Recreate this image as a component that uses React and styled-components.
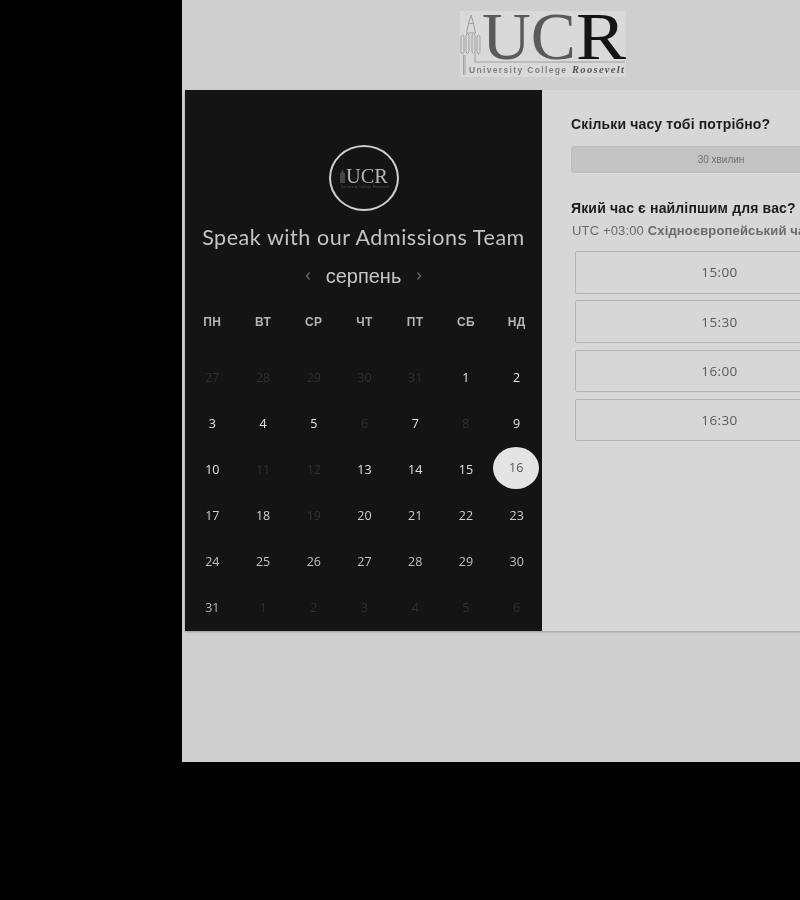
import React from 'react'
import styled, { createGlobalStyle } from 'styled-components'

const GlobalStyle = createGlobalStyle`
  html, body {
    margin: 0;
    height: 100%;
    background: #000;
    overflow: hidden;
  }
  * { box-sizing: border-box; }
`

const Sheet = styled.div`
  margin-left: 182px;
  width: 722px;
  height: 762px;
  background: #cfcfcf;
  font-family: "Liberation Sans", Arial, sans-serif;
  display: flex;
  flex-direction: column;
  filter: grayscale(1) blur(0.35px);
`

const LogoBar = styled.header`
  display: flex;
  justify-content: center;
  padding-top: 11px;
  height: 90px;
`

const Card = styled.section`
  margin-left: 3px;
  width: 716px;
  height: 541px;
  display: flex;
  box-shadow: 0 1px 2px rgba(0, 0, 0, 0.25);
`

const CalendarPane = styled.div`
  width: 357px;
  background: #141414;
  padding: 55px 0 0 2px;
  display: flex;
  flex-direction: column;
  align-items: center;
`

const Badge = styled.div`
  flex-shrink: 0;
  width: 70px;
  height: 66px;
  margin-right: 2px;
  border: 2px solid #cfcfcf;
  border-radius: 50%;
  display: flex;
  align-items: center;
  justify-content: center;
`

const EventTitle = styled.h1`
  margin: 11px 2px 0 0;
  font-family: Lato, sans-serif;
  font-weight: 400;
  font-size: 21.5px;
  line-height: 30px;
  letter-spacing: 0.55px;
  color: #c4c4c4;
  white-space: nowrap;
`

const MonthRow = styled.div`
  margin: 11px 2px 0 0;
  height: 26px;
  display: flex;
  align-items: center;
  gap: 14px;
  color: #6e6e6e;
`

const MonthName = styled.span`
  font-size: 20px;
  color: #c6c6c6;
`

const WeekHeader = styled.div`
  margin-top: 25px;
  width: 100%;
  display: grid;
  grid-template-columns: repeat(7, 1fr);
`

const WeekDay = styled.span`
  text-align: center;
  font-size: 12px;
  line-height: 16px;
  font-weight: 700;
  letter-spacing: 0.4px;
  color: #b4b4b4;
`

const DaysGrid = styled.div`
  margin-top: 24px;
  width: 100%;
  display: grid;
  grid-template-columns: repeat(7, 1fr);
  grid-auto-rows: 46px;
`

const Day = styled.div`
  display: flex;
  align-items: center;
  justify-content: center;
  font-family: "Open Sans", sans-serif;
  font-size: 12.5px;
  color: ${({ $tone }) => $tone};
`

const SelectedDay = styled.div`
  width: 46px;
  height: 42px;
  margin: 0 1px 2px 0;
  border-radius: 50%;
  background: #e4e4e4;
  color: #555;
  display: flex;
  align-items: center;
  justify-content: center;
  font-family: "Open Sans", sans-serif;
  font-size: 12.5px;
  padding-bottom: 2px;
`

const SlotPane = styled.div`
  flex: 1;
  background: #d7d7d7;
  padding: 26px 29px 0;
`

const Question = styled.h2`
  margin: 0;
  font-size: 14px;
  line-height: 17px;
  font-weight: 700;
  letter-spacing: 0.15px;
  color: #1d1d1d;
  white-space: nowrap;
`

const DurationButton = styled.div`
  margin: 13px 0 27px;
  width: 300px;
  height: 27px;
  background: #c3c3c3;
  border: 1px solid #bdbdbd;
  border-radius: 3px;
  display: flex;
  align-items: center;
  justify-content: center;
  font-size: 10px;
  color: #707070;
`

const Zone = styled.p`
  margin: 6px 0 0 1px;
  font-size: 13px;
  line-height: 16px;
  letter-spacing: 0.15px;
  color: #6a6a6a;
  white-space: nowrap;
  font-weight: 400;
  b { font-weight: 700; }
`

const SlotList = styled.div`
  margin: 12px 0 0 4px;
  width: 289px;
  display: flex;
  flex-direction: column;
  gap: 6.8px;
`

const Slot = styled.div`
  height: 42.5px;
  border: 1px solid #b4b4b4;
  border-radius: 2px;
  display: flex;
  align-items: center;
  justify-content: center;
  font-family: "Open Sans", sans-serif;
  font-size: 13.5px;
  letter-spacing: 0.4px;
  color: #5a5a5a;
`

const Chevron = ({ left }) => (
  <svg width="8" height="10" viewBox="0 0 8 10" fill="none" stroke="currentColor" strokeWidth="1.2">
    <path d={left ? 'M5.5 1.5 2.5 5l3 3.5' : 'M2.5 1.5 5.5 5l-3 3.5'} />
  </svg>
)

function MainLogo() {
  return (
    <svg width="166" height="66" viewBox="0 0 166 66">
      <rect width="166" height="66" fill="#d9d9d9" />
      <g fill="none" stroke="#999" strokeWidth="0.9">
        <path d="M11 4 8.500 12.500 6.500 22h9l-2-9.500zM8.500 12.500h5" />
        <path d="M1 26q1.500-4 3 0v15q-1.500 4-3 0zM6 24q1.500-3 3 0v17q-1.500 3-3 0zM12 24q1.500-3 3 0v17q-1.500 3-3 0zM17 26q1.500-4 3 0v15q-1.500 4-3 0z" />
        <path d="M3.500 44v20M5 44v20M15 42v9h150" />
      </g>
      <text x="22" y="48" fontFamily="Liberation Serif" fontSize="68" fill="#5a5a5a" textLength="94" lengthAdjust="spacingAndGlyphs">UC</text>
      <text x="116" y="48" fontFamily="Liberation Serif" fontSize="68" fill="#141414" textLength="50" lengthAdjust="spacingAndGlyphs">R</text>
      <text x="9" y="62" fontFamily="Liberation Sans" fontSize="8.500" fontWeight="700" fill="#808080" textLength="97">University College</text>
      <text x="112" y="62" fontFamily="Liberation Serif" fontSize="10.500" fontWeight="700" fontStyle="italic" fill="#555" textLength="52">Roosevelt</text>
    </svg>
  )
}

function BadgeLogo() {
  return (
    <svg width="60" height="34" viewBox="0 0 60 34">
      <path d="M7 12 8.500 8l1.500 4h1v10H6V12z" fill="#444" />
      <text x="12" y="22" fontFamily="Liberation Serif" fontSize="22" fill="#b5b5b5" textLength="42" lengthAdjust="spacingAndGlyphs">UCR</text>
      <text x="7" y="27" fontFamily="Liberation Sans" fontSize="3" fill="#5c5c5c" textLength="48">University College Roosevelt</text>
    </svg>
  )
}

const weekDays = ['ПН', 'ВТ', 'СР', 'ЧТ', 'ПТ', 'СБ', 'НД']

const OFF = '#303030'
// brightness drops a little row by row, like in the original
const rowTones = ['#e8e8e8', '#e4e4e4', '#e0e0e0', '#d0d0d0', '#c0c0c0', '#b8b8b8']

const days = [
  [27, 0], [28, 0], [29, 0], [30, 0], [31, 0], [1, 1], [2, 1],
  [3, 1], [4, 1], [5, 1], [6, 0], [7, 1], [8, 0], [9, 1],
  [10, 1], [11, 0], [12, 0], [13, 1], [14, 1], [15, 1], [16, 2],
  [17, 1], [18, 1], [19, 0], [20, 1], [21, 1], [22, 1], [23, 1],
  [24, 1], [25, 1], [26, 1], [27, 1], [28, 1], [29, 1], [30, 1],
  [31, 1], [1, 0], [2, 0], [3, 0], [4, 0], [5, 0], [6, 0],
]

const slots = ['15:00', '15:30', '16:00', '16:30']

export default function App() {
  return (
    <>
      <GlobalStyle />
      <Sheet>
        <LogoBar>
          <MainLogo />
        </LogoBar>
        <Card>
          <CalendarPane>
            <Badge>
              <BadgeLogo />
            </Badge>
            <EventTitle>Speak with our Admissions Team</EventTitle>
            <MonthRow>
              <Chevron left />
              <MonthName>серпень</MonthName>
              <Chevron />
            </MonthRow>
            <WeekHeader>
              {weekDays.map((d) => <WeekDay key={d}>{d}</WeekDay>)}
            </WeekHeader>
            <DaysGrid>
              {days.map(([n, state], i) => (
                <Day key={i} $tone={state ? rowTones[Math.floor(i / 7)] : OFF}>
                  {state === 2 ? <SelectedDay>{n}</SelectedDay> : n}
                </Day>
              ))}
            </DaysGrid>
          </CalendarPane>
          <SlotPane>
            <Question>Скільки часу тобі потрібно?</Question>
            <DurationButton>30 хвилин</DurationButton>
            <Question>Який час є найліпшим для вас?</Question>
            <Zone>UTC +03:00 <b>Східноєвропейський час</b></Zone>
            <SlotList>
              {slots.map((s) => <Slot key={s}>{s}</Slot>)}
            </SlotList>
          </SlotPane>
        </Card>
      </Sheet>
    </>
  )
}
